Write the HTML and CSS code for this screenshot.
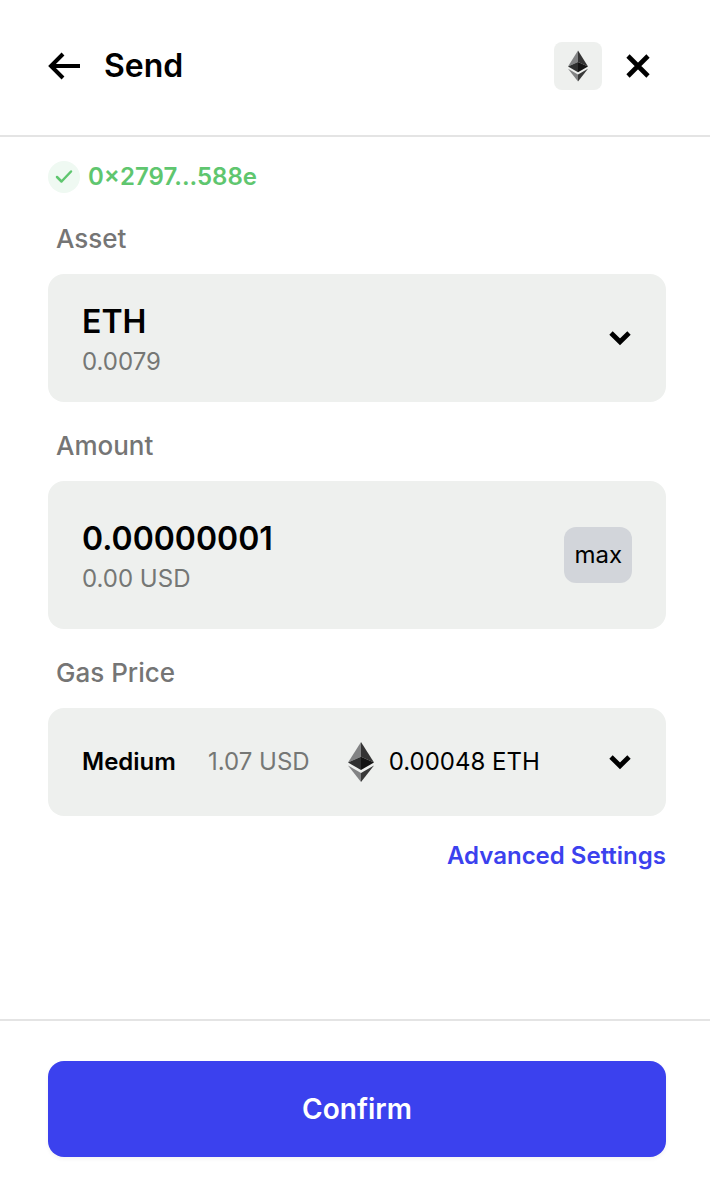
FILE: index.html
```html
<!DOCTYPE html>
<html lang="en">
<head>
<meta charset="utf-8">
<meta name="viewport" content="width=device-width, initial-scale=1">
<title>Send</title>
<link rel="stylesheet" href="styles.css">
</head>
<body>
<svg class="symbols">
  <symbol id="eth" viewBox="0 0 26 40">
    <path fill="#828384" d="M13 0 0 20.500 13 14.800z"/>
    <path fill="#343434" d="M13 0v14.800l13 5.700z"/>
    <path fill="#2f3030" d="M0 20.500 13 14.800V28z"/>
    <path fill="#141414" d="M26 20.500 13 14.800V28z"/>
    <path fill="#828384" d="M0 23.500 13 40v-9z"/>
    <path fill="#393939" d="M26 23.500 13 40v-9z"/>
  </symbol>
  <symbol id="chevron" viewBox="0 0 24 16">
    <path d="m3 3 9 8.800L21 3" fill="none" stroke="#000" stroke-width="4.800"/>
  </symbol>
</svg>
<form class="screen">
  <header class="header">
    <button class="icon-button" type="button" aria-label="Back">
      <svg class="back-icon" viewBox="0 0 32 28" fill="none" stroke="#000" stroke-width="4"><path d="M32 14H3M15 2 3 14l12 12"/></svg>
    </button>
    <h1 class="title">Send</h1>
    <button class="network" type="button" aria-label="Network: Ethereum"><svg class="network-icon"><use href="#eth"/></svg></button>
    <button class="icon-button" type="button" aria-label="Close">
      <svg class="close-icon" viewBox="0 0 24 24" fill="none" stroke="#000" stroke-width="4.600"><path d="m2 2 20 20M22 2 2 22"/></svg>
    </button>
  </header>
  <main class="content">
    <div class="recipient">
      <svg class="check-icon" viewBox="0 0 32 32" fill="none"><circle cx="16" cy="16" r="16" fill="#eff9f2"/><path d="m9 16 4.500 4.500 9.500-10" stroke="#5fc66f" stroke-width="2.500" stroke-linecap="round" stroke-linejoin="round"/></svg>
      <span>0×2797...588e</span>
    </div>

    <label class="label" for="asset">Asset</label>
    <div class="card">
      <div class="stack">
        <select class="value" id="asset"><option>ETH</option></select>
        <span class="muted">0.0079</span>
      </div>
      <svg class="chevron"><use href="#chevron"/></svg>
    </div>

    <label class="label" for="amount">Amount</label>
    <div class="card card-amount">
      <div class="stack">
        <input class="value" id="amount" type="text" inputmode="decimal" value="0.00000001">
        <span class="muted">0.00 USD</span>
      </div>
      <button class="max" type="button">max</button>
    </div>

    <label class="label" for="gas">Gas Price</label>
    <div class="card card-gas">
      <select class="speed" id="gas"><option>Medium</option></select>
      <span class="muted">1.07 USD</span>
      <span class="fee"><svg class="fee-icon"><use href="#eth"/></svg>0.00048 ETH</span>
      <svg class="chevron"><use href="#chevron"/></svg>
    </div>

    <a class="advanced" href="#">Advanced Settings</a>
  </main>
  <footer class="footer"><button class="confirm" type="submit">Confirm</button></footer>
</form>
</body>
</html>
```
FILE: styles.css
```css
* { box-sizing: border-box; }

body {
  margin: 0;
  background: #fff;
  color: #000;
  font: 24px/32px Inter, "Liberation Sans", sans-serif;
}

button, input, select {
  margin: 0;
  padding: 0;
  border: 0;
  background: none;
  color: inherit;
  font: inherit;
  appearance: none;
}

button, select { cursor: pointer; }

svg { display: block; flex: none; }

.symbols { display: none; }

.screen {
  display: flex;
  flex-direction: column;
  min-height: 100vh;
}

.header {
  display: flex;
  align-items: center;
  gap: 24px;
  padding: 42px 60px 45px 48px;
  border-bottom: 2px solid #e4e4e4;
}

.back-icon { width: 32px; height: 28px; }
.close-icon { width: 24px; height: 24px; }

.title {
  flex: 1;
  margin: 0;
  font-size: 32px;
  line-height: 40px;
  font-weight: 600;
}

.network {
  display: grid;
  place-items: center;
  width: 48px;
  height: 48px;
  border-radius: 8px;
  background: #eef0ee;
}

.network-icon { width: 20px; height: 32px; }

.content {
  display: flex;
  flex: 1;
  flex-direction: column;
  padding: 24px 44px 24px 48px;
}

.recipient {
  display: flex;
  align-items: center;
  gap: 8px;
  margin-bottom: 2px;
  color: #5fc66f;
  font-weight: 600;
}

.check-icon { width: 32px; height: 32px; }

.label {
  margin: 28px 8px 19px;
  color: #757575;
  font-size: 26px;
  font-weight: 500;
}

.card {
  display: flex;
  align-items: center;
  min-height: 128px;
  padding: 16px 34px;
  border-radius: 16px;
  background: #eef0ee;
}

.card-amount { min-height: 148px; }
.card-gas { min-height: 108px; }

.stack {
  display: flex;
  flex: 1;
  flex-direction: column;
  min-width: 0;
}

.value {
  width: 100%;
  height: 48px;
  font-size: 32px;
  line-height: 48px;
  font-weight: 600;
}

.muted { color: #757775; }

.chevron {
  width: 24px;
  height: 16px;
  margin-left: auto;
}

.max {
  height: 56px;
  padding: 0 10px;
  border-radius: 12px;
  background: #d2d5da;
}

.speed {
  margin-right: 32px;
  font-weight: 600;
}

.fee {
  display: flex;
  align-items: center;
  gap: 15px;
  margin-left: 38px;
}

.fee-icon { width: 26px; height: 40px; }

.advanced {
  align-self: flex-end;
  margin-top: 24px;
  color: #3b41ee;
  font-weight: 600;
  text-decoration: none;
}

.footer {
  padding: 40px 44px 38px 48px;
  border-top: 2px solid #e4e4e4;
}

.confirm {
  width: 100%;
  height: 96px;
  border-radius: 16px;
  background: #3b41ee;
  box-shadow: 0 2px 4px rgba(0, 0, 0, 0.05);
  color: #fff;
  font-size: 28px;
  font-weight: 600;
}
```
